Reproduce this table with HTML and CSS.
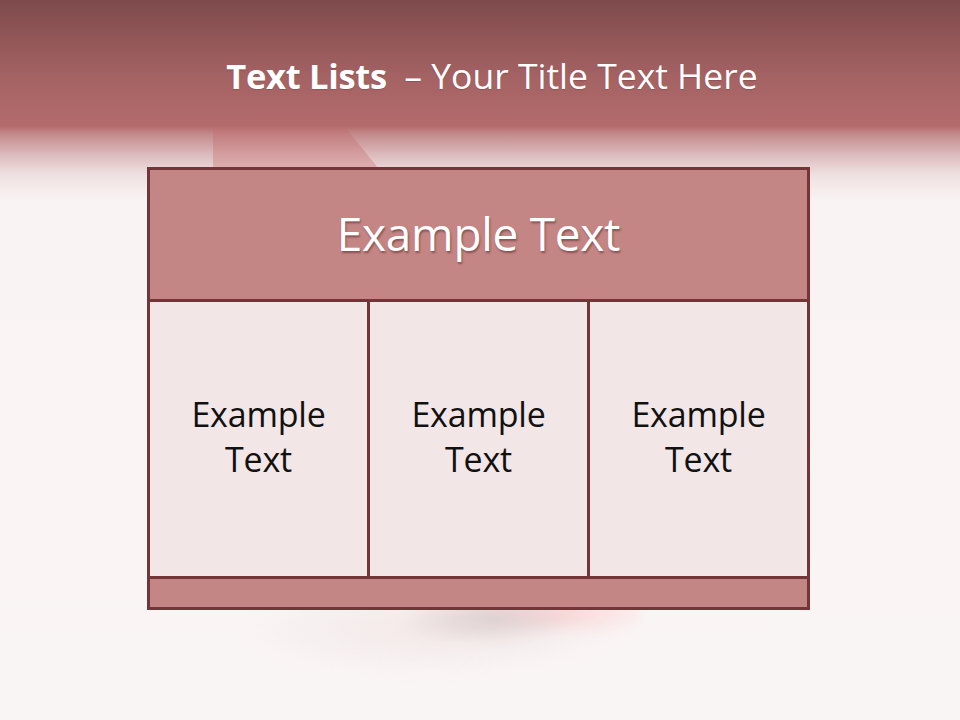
FILE: index.html
```html
<!DOCTYPE html>
<html>
<head>
<meta charset="utf-8">
<link rel="stylesheet" href="styles.css">
</head>
<body>
<div class="slide">
  <div class="deco"></div>
  <div class="glow"></div>
  <header class="title"><b>Text Lists</b>&nbsp; <span class="sub">– Your Title Text Here</span></header>
  <div class="board">
    <div class="head">Example Text</div>
    <div class="cell">Example<br>Text</div>
    <div class="cell">Example<br>Text</div>
    <div class="cell">Example<br>Text</div>
    <div class="foot"></div>
  </div>
</div>
</body>
</html>
```
FILE: styles.css
```css
html, body {
  margin: 0;
  padding: 0;
}
body {
  width: 960px;
  height: 720px;
  overflow: hidden;
  font-family: "Open Sans", "DejaVu Sans", sans-serif;
}
.slide {
  position: relative;
  width: 960px;
  height: 720px;
  box-sizing: border-box;
  padding-top: 51px;
  background:
    linear-gradient(to bottom,
      #7d4a4c 0px,
      #935758 40px,
      #a56364 80px,
      #b46b6c 126px,
      #c38a8b 134px,
      #dcbcbd 155px,
      #efe1e1 175px,
      #f9f3f3 200px,
      #faf5f5 720px);
}
.deco {
  position: absolute;
  left: 213px;
  top: 128px;
  width: 165px;
  height: 40px;
  background: linear-gradient(to bottom, rgba(190,110,112,0.55), rgba(215,150,152,0.6));
  clip-path: polygon(0 0, 133px 0, 165px 100%, 0 100%);
}
.glow {
  position: absolute;
  left: 240px;
  top: 600px;
  width: 400px;
  height: 80px;
  background:
    radial-gradient(ellipse 90px 28px at 250px 18px, rgba(160,140,140,0.3), transparent),
    radial-gradient(ellipse 90px 22px at 330px 14px, rgba(255,150,150,0.3), transparent),
    radial-gradient(ellipse 190px 45px at 190px 30px, rgba(225,195,195,0.25), transparent);
  filter: blur(6px);
}
.title {
  position: relative;
  text-align: center;
  color: #ffffff;
  font-size: 34.5px;
  line-height: 48px;
  height: 48px;
  letter-spacing: -0.3px;
  padding-left: 24px;
  text-shadow: 0 1px 1px rgba(80,30,30,0.25);
}
.title b {
  font-weight: 700;
}
.title .sub {
  font-size: 35.5px;
  letter-spacing: 0;
}
.board {
  position: relative;
  margin-top: 68px;
  margin-left: 147px;
  width: 663px;
  box-sizing: border-box;
  padding: 3px;
  background: #743538;
  display: grid;
  grid-template-columns: 217px 217px 217px;
  grid-template-rows: 129px 274px 28px;
  gap: 3px;
}
.head {
  grid-column: 1 / 4;
  background: #c48585;
  color: #ffffff;
  font-size: 46px;
  display: flex;
  align-items: center;
  justify-content: center;
  padding-bottom: 4px;
  text-shadow: 1px 2px 2px rgba(90,40,40,0.55);
  letter-spacing: -0.3px;
}
.cell {
  background: #f2e6e6;
  color: #111111;
  font-size: 34px;
  line-height: 45px;
  text-align: center;
  display: flex;
  align-items: center;
  justify-content: center;
  padding-bottom: 4px;
  letter-spacing: -0.2px;
}
.foot {
  grid-column: 1 / 4;
  background: #c48585;
}
```
